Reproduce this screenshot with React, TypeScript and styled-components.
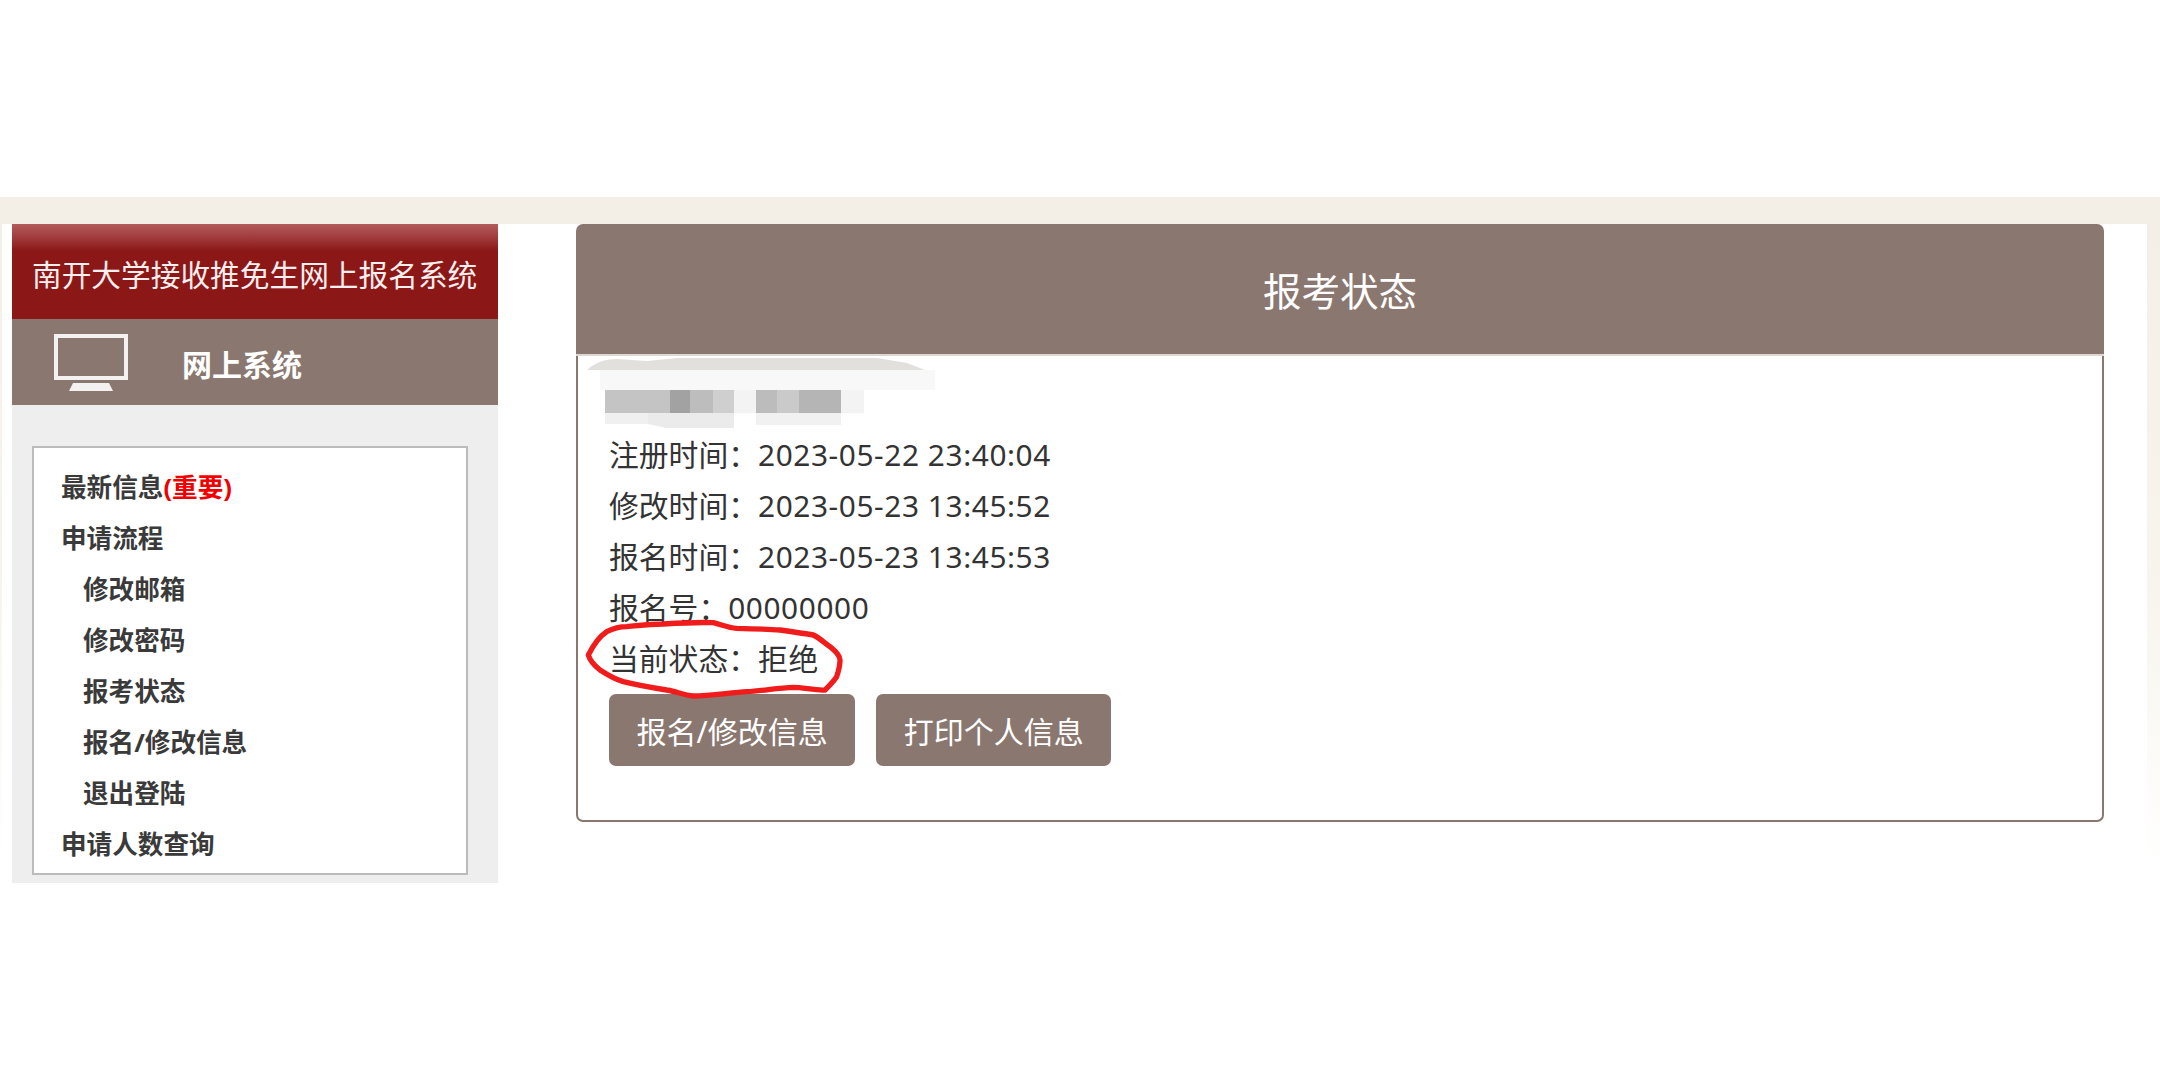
import styled, { createGlobalStyle } from 'styled-components';

const brown = '#8a7870';

const GlobalStyle = createGlobalStyle`
  html, body { margin: 0; padding: 0; background: #fff; }
  body {
    width: 2160px;
    height: 1080px;
    overflow: hidden;
    font-family: "Noto Sans", "Noto Sans CJK SC", sans-serif;
    color: #333;
  }
`;

const TopBand = styled.div`
  margin-top: 197px;
  height: 27px;
  background: #f4efe6;
`;

const Backdrop = styled.div`
  padding: 0 13px 0 2px;
  background: linear-gradient(to bottom, #f4efe6 0, #f8f5ee 380px, #fff 640px);
`;

const Frame = styled.div`
  display: flex;
  align-items: flex-start;
  height: 856px;
  padding-left: 10px;
  background: #fff;
`;

const Sidebar = styled.aside`
  width: 486px;
  flex: none;
`;

const SiteTitle = styled.div`
  height: 95px;
  padding: 3px 0 0 20px;
  box-sizing: border-box;
  display: flex;
  align-items: center;
  font-size: 29.7px;
  color: #fbeeee;
  white-space: nowrap;
  background: linear-gradient(to bottom, #b25b5b 0, #a33f40 12px, #8b1717 27px, #8b1717 100%);
`;

const SystemBar = styled.div`
  height: 86px;
  padding: 2px 0 0 42px;
  box-sizing: border-box;
  display: flex;
  align-items: center;
  gap: 54px;
  background: ${brown};
  color: #fff;
  font-size: 30px;
  font-weight: 700;
`;

const MenuWrap = styled.div`
  padding: 41px 30px 8px 20px;
  background: #eee;
`;

const MenuBox = styled.ul`
  list-style: none;
  margin: 0;
  height: 429px;
  box-sizing: border-box;
  padding: 14px 0 0 27px;
  background: #fff;
  border: 2px solid #bbb;
`;

const MenuItem = styled.li<{ $nested?: boolean }>`
  height: 51px;
  line-height: 51px;
  padding-left: ${({ $nested }) => ($nested ? '22px' : '0')};
  font-size: 25.6px;
  font-weight: 700;
  color: #3a3a3a;
  white-space: nowrap;
`;

const Important = styled.span`
  color: #f00000;
`;

const Panel = styled.main`
  position: relative;
  width: 1528px;
  flex: none;
  margin-left: 78px;
`;

const PanelHeader = styled.h1`
  margin: 0;
  height: 132px;
  box-sizing: border-box;
  display: flex;
  align-items: center;
  justify-content: center;
  padding-bottom: 1px;
  background: ${brown};
  border-bottom: 2px solid #dcd9d2;
  border-radius: 7px 7px 0 0;
  color: #fff;
  font-size: 38.5px;
  font-weight: 400;
`;

const PanelBody = styled.div`
  height: 466px;
  box-sizing: border-box;
  border: 2px solid ${brown};
  border-top: none;
  border-radius: 0 0 7px 7px;
`;

const Redaction = styled.svg`
  display: block;
  width: 420px;
  height: 73px;
  filter: blur(0.6px);
`;

const Details = styled.div`
  padding-left: 31px;
`;

const DetailRow = styled.div`
  height: 51px;
  line-height: 51px;
  font-size: 29.8px;
  color: #333;
  white-space: nowrap;
`;

const DetailValue = styled.span`
  letter-spacing: 0.6px;
`;

const Actions = styled.div`
  display: flex;
  gap: 21px;
  margin-top: 10px;
`;

const ActionButton = styled.button`
  height: 72px;
  padding: 0 27.5px;
  border: none;
  border-radius: 7px;
  background: ${brown};
  color: #fff;
  font: inherit;
  font-size: 30px;
`;

const CircleMark = styled.svg`
  position: absolute;
  left: 4px;
  top: 386px;
  width: 280px;
  height: 100px;
  pointer-events: none;
`;

const MonitorIcon = () => (
  <svg width="74" height="58" viewBox="0 0 74 58" fill="none">
    <rect x="2" y="2" width="70" height="42" fill="none" stroke="#f4f2f0" strokeWidth="4" />
    <path d="M19 49h36l4 8H15z" fill="#f4f2f0" />
  </svg>
);

const menuItems = [
  { label: '申请流程' },
  { label: '修改邮箱', nested: true },
  { label: '修改密码', nested: true },
  { label: '报考状态', nested: true },
  { label: '报名/修改信息', nested: true },
  { label: '退出登陆', nested: true },
  { label: '申请人数查询' },
];

const details = [
  { label: '注册时间：', value: '2023-05-22 23:40:04' },
  { label: '修改时间：', value: '2023-05-23 13:45:52' },
  { label: '报名时间：', value: '2023-05-23 13:45:53' },
  { label: '报名号：', value: '00000000' },
  { label: '当前状态：', value: '拒绝' },
];

// mosaic blocks of the hidden name line: x, width, colour
const mosaic: [number, number, string][] = [
  [27, 65, '#c4c4c4'],
  [92, 20, '#a2a2a2'],
  [112, 23, '#bdbdbd'],
  [135, 21, '#cfcfcf'],
  [156, 22, '#f3f3f3'],
  [178, 21, '#bcbcbc'],
  [199, 22, '#cacaca'],
  [221, 42, '#b5b5b5'],
  [263, 23, '#f3f3f3'],
];

export default function App() {
  return (
    <>
      <GlobalStyle />
      <TopBand />
      <Backdrop>
        <Frame>
          <Sidebar>
            <SiteTitle>南开大学接收推免生网上报名系统</SiteTitle>
            <SystemBar>
              <MonitorIcon />
              <span>网上系统</span>
            </SystemBar>
            <MenuWrap>
              <MenuBox>
                <MenuItem>
                  最新信息<Important>(重要)</Important>
                </MenuItem>
                {menuItems.map((item) => (
                  <MenuItem key={item.label} $nested={item.nested}>
                    {item.label}
                  </MenuItem>
                ))}
              </MenuBox>
            </MenuWrap>
          </Sidebar>
          <Panel>
            <PanelHeader>报考状态</PanelHeader>
            <PanelBody>
              <Redaction viewBox="0 0 420 73">
                <rect x="22" y="14" width="335" height="20" fill="#f8f8f8" />
                <path
                  d="M9 14c8-8 20-11 30-11l30 2 30-3h200l30 5 18 7z"
                  fill="#e2e0dc"
                />
                {mosaic.map(([x, w, fill]) => (
                  <rect key={x} x={x} y="34" width={w} height="23" fill={fill} />
                ))}
                <path d="M27 57h43v11H27z" fill="#f0f0f0" />
                <path d="M70 57h86v15H88l-18-4z" fill="#ebebeb" />
                <path d="M178 57h85v12h-85z" fill="#f1f1f1" />
              </Redaction>
              <Details>
                {details.map((row) => (
                  <DetailRow key={row.label}>
                    {row.label}
                    <DetailValue>{row.value}</DetailValue>
                  </DetailRow>
                ))}
                <Actions>
                  <ActionButton>报名/修改信息</ActionButton>
                  <ActionButton>打印个人信息</ActionButton>
                </Actions>
              </Details>
            </PanelBody>
            <CircleMark viewBox="0 0 840 300">
              <path
                d="M25 135C40 105 60 78 80 65c20-10 40-15 60-15 40-4 75-8 110-8 50-3 110-6 150-4 25 6 45 15 70 17 45 1 90 2 130 5 35 5 70 10 100 15 20 10 35 25 50 35 15 12 30 27 30 40 0 20-5 35-10 50-10 15-25 30-35 40-30 2-65-8-95-8-45 1-95 11-140 13-50 3-110 13-160 13-30-3-55-15-80-18-45-7-90-15-130-25-25-7-50-22-70-35-15-12-30-28-35-45z"
                fill="none"
                stroke="#f01c1c"
                strokeWidth="16"
                strokeLinejoin="round"
              />
            </CircleMark>
          </Panel>
        </Frame>
      </Backdrop>
    </>
  );
}
